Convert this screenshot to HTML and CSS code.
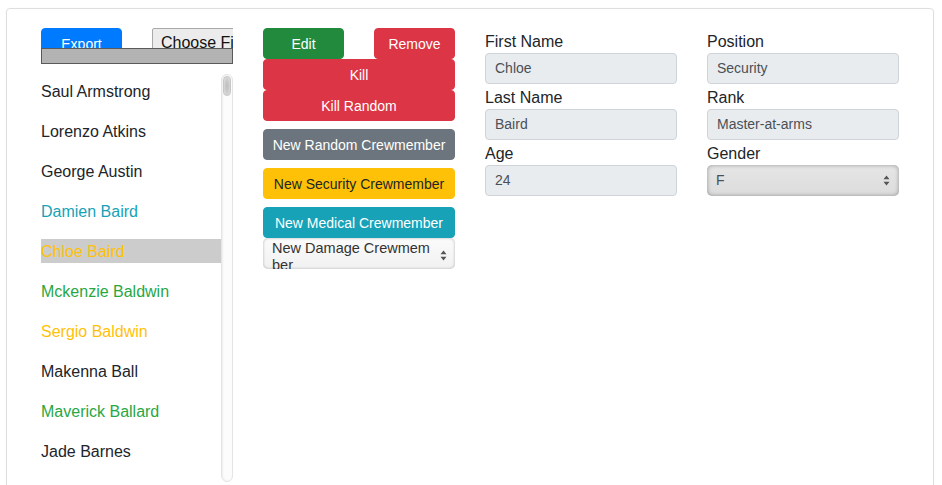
FILE: index.html
```html
<!DOCTYPE html>
<html>
<head>
<meta charset="utf-8">
<link rel="stylesheet" href="styles.css">
</head>
<body>
<div class="card">
  <div class="grid">
    <div class="col-left">
      <div class="top-row">
        <button class="btn btn-primary btn-half">Export</button>
        <div class="file-wrap"><span class="file-btn">Choose File</span></div>
      </div>
      <div class="gray-bar"></div>
      <div class="list-box">
        <ul class="crew-list">
          <li class="c-dark">Saul Armstrong</li>
          <li class="c-dark">Lorenzo Atkins</li>
          <li class="c-dark">George Austin</li>
          <li class="c-info">Damien Baird</li>
          <li class="c-warn selected">Chloe Baird</li>
          <li class="c-success">Mckenzie Baldwin</li>
          <li class="c-warn">Sergio Baldwin</li>
          <li class="c-dark">Makenna Ball</li>
          <li class="c-success">Maverick Ballard</li>
          <li class="c-dark">Jade Barnes</li>
        </ul>
        <div class="scroll-track"><div class="scroll-thumb"></div></div>
      </div>
    </div>

    <div class="col-mid">
      <div class="pair">
        <button class="btn btn-success btn-half">Edit</button>
        <button class="btn btn-danger btn-half">Remove</button>
      </div>
      <button class="btn btn-danger">Kill</button>
      <button class="btn btn-danger">Kill Random</button>
      <button class="btn btn-secondary spaced">New Random Crewmember</button>
      <button class="btn btn-warning spaced">New Security Crewmember</button>
      <button class="btn btn-info spaced">New Medical Crewmember</button>
      <div class="fake-select light">
        <span class="sel-text wrap">New Damage Crewmember</span>
        <svg class="arrows" width="7" height="11" viewBox="0 0 7 11"><path d="M3.5 0.5 L6.5 4.3 L0.5 4.3 Z M3.5 10.5 L6.5 6.7 L0.5 6.7 Z" fill="#555"/></svg>
      </div>
    </div>

    <div class="form-col">
      <label class="lbl">First Name</label>
      <div class="input">Chloe</div>
      <label class="lbl">Last Name</label>
      <div class="input">Baird</div>
      <label class="lbl">Age</label>
      <div class="input">24</div>
    </div>

    <div class="form-col">
      <label class="lbl">Position</label>
      <div class="input">Security</div>
      <label class="lbl">Rank</label>
      <div class="input">Master-at-arms</div>
      <label class="lbl">Gender</label>
      <div class="fake-select dark">
        <span class="sel-text">F</span>
        <svg class="arrows" width="7" height="11" viewBox="0 0 7 11"><path d="M3.5 0.5 L6.5 4.3 L0.5 4.3 Z M3.5 10.5 L6.5 6.7 L0.5 6.7 Z" fill="#555"/></svg>
      </div>
    </div>
  </div>
</div>
</body>
</html>
```

FILE: styles.css
```css
html, body {
  margin: 0;
  padding: 0;
  background: #fff;
  overflow: hidden;
  height: 485px;
}
body {
  font-family: "Liberation Sans", Arial, sans-serif;
  color: #212529;
}
.card {
  margin: 8px 8px 0 6px;
  border: 1px solid #dedede;
  border-radius: 4px;
  padding: 19px 34px 0 34px;
  height: 520px;
  box-shadow: 0 0 2px rgba(0,0,0,0.04);
}
.grid {
  display: grid;
  grid-template-columns: repeat(4, 192px);
  column-gap: 30px;
  align-items: start;
}

/* buttons */
.btn {
  display: block;
  width: 192px;
  height: 31px;
  margin: 0;
  border: 1px solid transparent;
  border-radius: 4px;
  font-family: "Liberation Sans", Arial, sans-serif;
  font-size: 14px;
  line-height: 21px;
  padding: 5px 0 3px 0;
  color: #fff;
  text-align: center;
  white-space: nowrap;
}
.btn-half { width: 81px; }
.btn-primary { background: #007bff; border-color: #007bff; }
.btn-success { background: #228a3d; border-color: #228a3d; }
.btn-danger { background: #dc3545; border-color: #dc3545; }
.btn-secondary { background: #6c757d; border-color: #6c757d; }
.btn-warning { background: #ffc107; border-color: #ffc107; color: #212529; }
.btn-info { background: #17a2b8; border-color: #17a2b8; }
.spaced { margin-top: 8px; }

/* left column */
.top-row {
  display: flex;
  gap: 30px;
  height: 31px;
}
.file-wrap {
  width: 81px;
  overflow: hidden;
}
.file-btn {
  display: block;
  width: 110px;
  height: 30px;
  box-sizing: border-box;
  background: #ececec;
  border: 1px solid #a9a9a9;
  border-radius: 2px;
  font-size: 16px;
  line-height: 27px;
  padding: 0 8px;
  color: #111;
  white-space: nowrap;
}
.gray-bar {
  margin-top: -11px;
  height: 16px;
  box-sizing: border-box;
  background: #b3b3b3;
  border: 1px solid #5a5a5a;
  position: relative;
}
.list-box {
  margin-top: 10px;
  display: flex;
  height: 408px;
}
.crew-list {
  list-style: none;
  margin: 0;
  padding: 5px 0 0 0;
  width: 180px;
  display: flex;
  flex-direction: column;
  gap: 16px;
  overflow: hidden;
}
.crew-list li {
  font-size: 16px;
  line-height: 26px;
  height: 24px;
  flex: none;
  white-space: nowrap;
}
.c-dark { color: #212529; }
.c-info { color: #17a2b8; }
.c-warn { color: #ffc107; }
.c-success { color: #28a745; }
.selected { background: #cccccc; }
.scroll-track {
  width: 12px;
  box-sizing: border-box;
  border: 1px solid #e4e4e4;
  border-radius: 6px;
  background: #fcfcfc;
  box-shadow: inset 1px 0 2px rgba(0,0,0,0.06);
}
.scroll-thumb {
  height: 20px;
  margin: 1px 1px 0 1px;
  border-radius: 5px;
  background: radial-gradient(ellipse at center, #bdbdbd 0%, #cfcfcf 55%, #e6e6e6 100%);
  border: 1px solid #c6c6c6;
  box-sizing: border-box;
}

/* middle column */
.pair {
  display: flex;
  gap: 30px;
}
.fake-select {
  display: flex;
  align-items: flex-start;
  height: 31px;
  box-sizing: border-box;
  border-radius: 5px;
  overflow: hidden;
  padding: 0 8px 0 9px;
  font-size: 14px;
  color: #333;
}
.fake-select.light {
  background: linear-gradient(#fbfbfb, #f1f1f1);
  box-shadow: inset 0 0 3px rgba(0,0,0,0.28);
}
.fake-select.dark {
  background: linear-gradient(#e6e6e6, #dcdcdc);
  box-shadow: inset 0 0 4px rgba(0,0,0,0.35);
  color: #495057;
}
.sel-text {
  line-height: 17px;
  padding-top: 2px;
}
.sel-text.wrap {
  width: 160px;
  white-space: normal;
  word-break: break-all;
  font-size: 14.5px;
}
.fake-select.dark .sel-text {
  line-height: 31px;
  padding-top: 0;
}
.arrows {
  flex: none;
  align-self: center;
  margin-left: auto;
}
.fake-select.light .arrows { margin-top: 4px; }
.fake-select.dark .arrows { margin-right: 1px; }

/* form */
.form-col {
  display: flex;
  flex-direction: column;
}
.lbl {
  font-size: 16px;
  line-height: 27px;
  height: 25px;
  display: block;
}
.input {
  height: 31px;
  box-sizing: border-box;
  background: #e9ecef;
  border: 1px solid #ced4da;
  border-radius: 4px;
  padding: 0 9px;
  font-size: 14px;
  line-height: 29px;
  color: #495057;
}
```
